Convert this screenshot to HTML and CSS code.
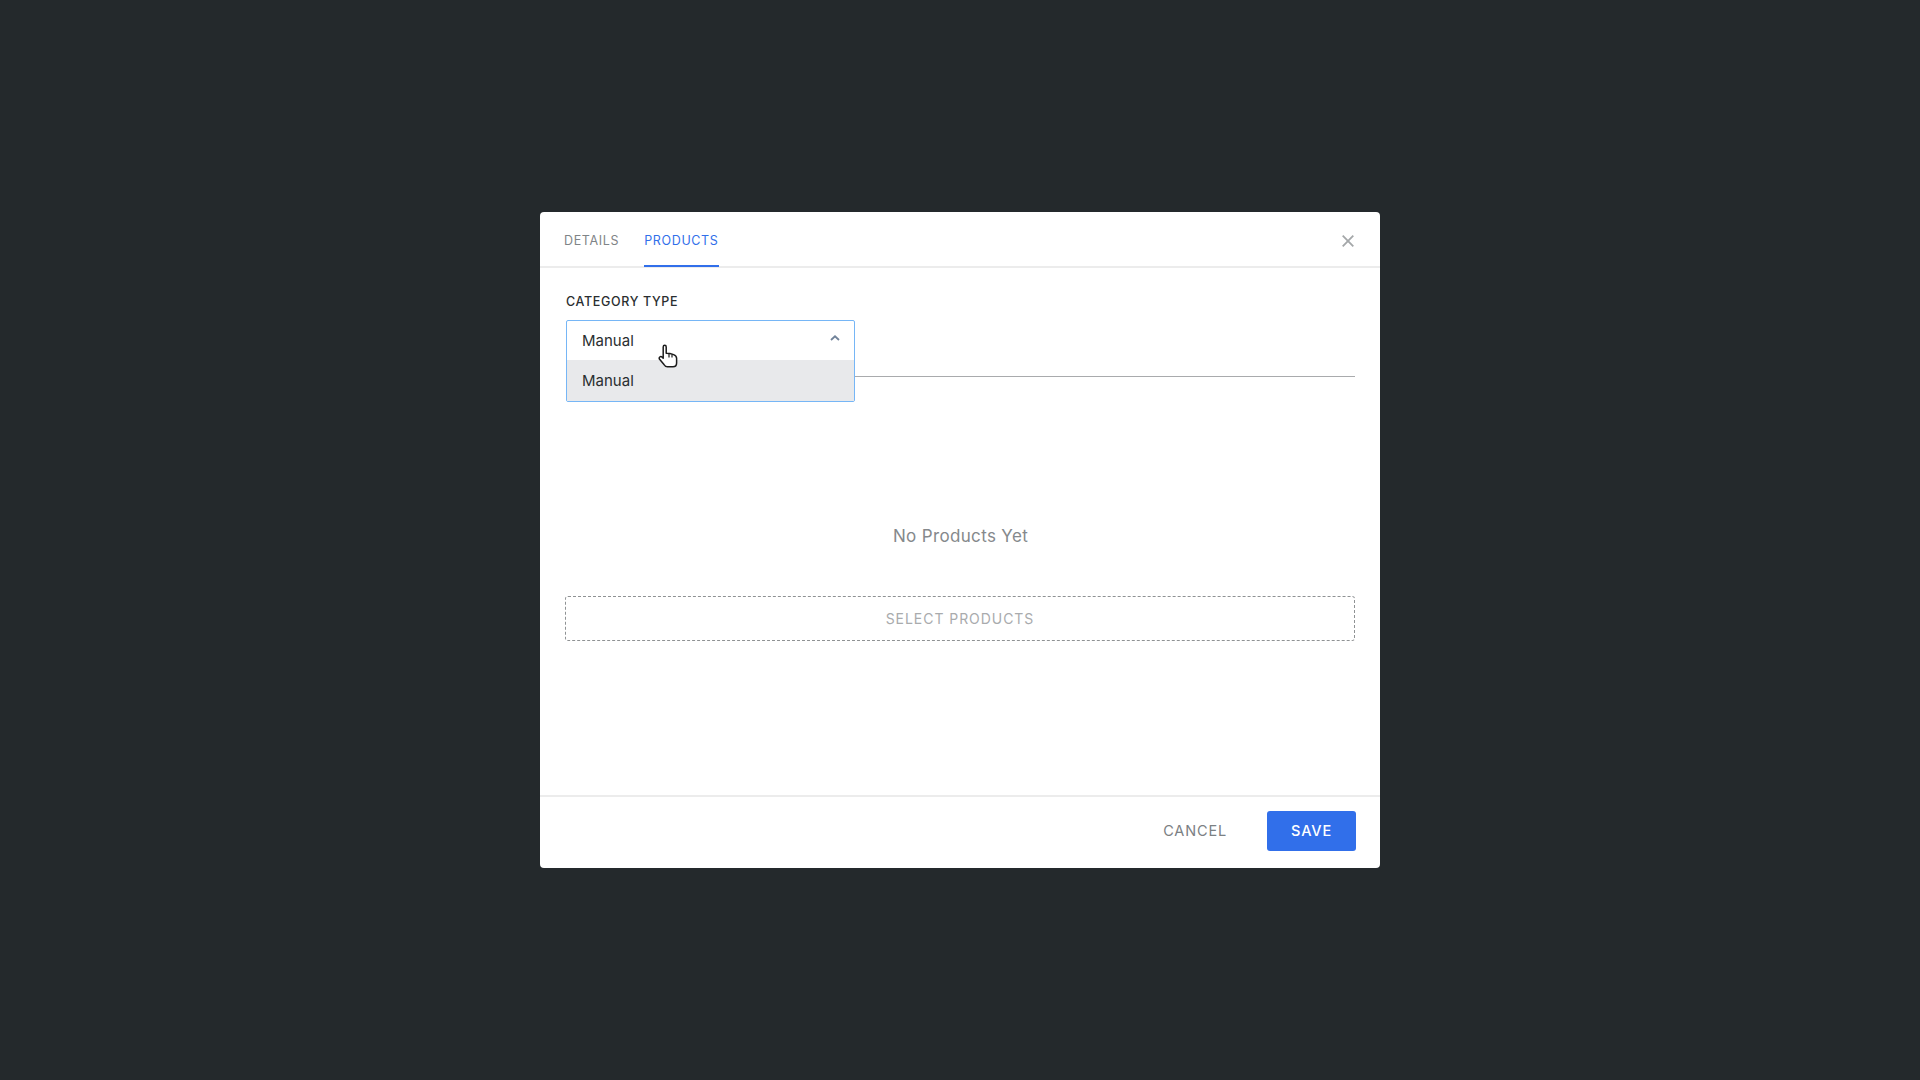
FILE: index.html
```html
<!DOCTYPE html>
<html>
<head>
    <title>Category Products</title>
    <link rel="stylesheet" href="styles.css">
</head>
<body>
    <div class="modal">
        <div class="modal-header">
            <div class="tabs">
                <div class="tab">DETAILS</div>
                <div class="tab tab-active">PRODUCTS</div>
            </div>
            <svg class="close-icon" width="12" height="12" viewBox="0 0 12 12">
                <path d="M0.7 0.7 L11.3 11.3 M11.3 0.7 L0.7 11.3" stroke="#a4a7a9" stroke-width="1.8" fill="none"/>
            </svg>
        </div>

        <div class="modal-body">
            <div class="field-label">CATEGORY TYPE</div>
            <div class="field">
                <div class="dropdown">
                    <div class="dropdown-value">
                        <span>Manual</span>
                        <svg class="chevron" width="10" height="6" viewBox="0 0 10 6">
                            <path d="M1 5 L5 1.3 L9 5" stroke="#71839a" stroke-width="1.8" fill="none"/>
                        </svg>
                    </div>
                    <div class="dropdown-option">Manual</div>
                </div>
            </div>

            <div class="empty-text">No Products Yet</div>
            <div class="select-products">SELECT PRODUCTS</div>
        </div>

        <div class="modal-footer">
            <div class="btn-cancel">CANCEL</div>
            <div class="btn-save">SAVE</div>
        </div>
    </div>

    <!-- mouse pointer caught in the shot -->
    <svg class="pointer" width="20" height="24" viewBox="0 0 20 24">
        <path d="M5.2 14.2 L5.2 3 C5.2 0.8 8.2 0.8 8.2 3 L8.2 9.2 C10.5 9.2 13 9.6 15.6 10.6 C17.6 11.4 18.6 12.4 18.6 14.2 L18.6 19 C18.6 21.4 17.4 22.8 15 22.8 L9.4 22.8 C7.8 22.8 7 22 6 20.6 L1.8 15.6 C0.2 13.6 2.6 11.6 4.2 13.2 Z" fill="#fff" stroke="#1c1c1c" stroke-width="1.5" stroke-linejoin="round"/>
        <path d="M11 10 L11 13.5 M14 10.6 L14 13.5" stroke="#1c1c1c" stroke-width="1.2" fill="none"/>
    </svg>
</body>
</html>
```

FILE: styles.css
```css
* {
    box-sizing: border-box;
}

body {
    margin: 0;
    height: 100vh;
    display: flex;
    align-items: center;
    justify-content: center;
    background-color: #24292c;
    font-family: Inter, "Liberation Sans", sans-serif;
}

.modal {
    width: 840px;
    height: 656px;
    background-color: #fff;
    border-radius: 4px;
    display: flex;
    flex-direction: column;
}

.modal-header {
    height: 56px;
    padding: 0 26px 0 24px;
    border-bottom: 2px solid #ececec;
    display: flex;
    align-items: center;
    justify-content: space-between;
}

.close-icon {
    margin-top: 4px;
}

.tabs {
    height: 54px;
    display: flex;
    gap: 25px;
}

.tab {
    height: 55px;
    padding-top: 21px;
    font-size: 12.5px;
    line-height: 16px;
    letter-spacing: 0.65px;
    color: #7f8487;
}

.tab-active {
    color: #316fea;
    border-bottom: 2px solid #316fea;
}

.modal-body {
    flex: 1;
    padding: 26px 25px 0 26px;
    display: flex;
    flex-direction: column;
}

.field-label {
    font-size: 12.5px;
    line-height: 16px;
    font-weight: 500;
    letter-spacing: 0.65px;
    color: #2a2e30;
}

.field {
    position: relative;
    height: 67px;
    border-bottom: 1px solid #a9abad;
}

.dropdown {
    position: absolute;
    top: 10px;
    left: 0;
    width: 289px;
    height: 82px;
    background-color: #fff;
    border: 1px solid #76b6f6;
    border-radius: 2px;
    font-size: 15px;
    color: #2a2e30;
}

.dropdown-value {
    height: 39px;
    padding: 0 14px 0 15px;
    display: flex;
    align-items: center;
    justify-content: space-between;
}

.chevron {
    margin-bottom: 5px;
}

.dropdown-option {
    height: 41px;
    padding: 0 15px;
    display: flex;
    align-items: center;
    background-color: #e8e9eb;
}

.empty-text {
    margin-top: 149px;
    text-align: center;
    font-size: 17px;
    line-height: 20px;
    letter-spacing: 0.35px;
    color: #85898c;
}

.select-products {
    height: 45px;
    margin-top: 50px;
    margin-left: -1px;
    border: 1px dashed #8f9294;
    border-radius: 3px;
    display: flex;
    align-items: center;
    justify-content: center;
    font-size: 14px;
    letter-spacing: 0.95px;
    color: #a9abad;
}

.modal-footer {
    height: 73px;
    padding: 13px 24px 17px 0;
    border-top: 2px solid #ececec;
    display: flex;
    align-items: center;
    justify-content: flex-end;
    gap: 40px;
    font-size: 14.5px;
    letter-spacing: 0.85px;
}

.btn-cancel {
    color: #7b8083;
}

.btn-save {
    width: 89px;
    height: 40px;
    background-color: #316fea;
    border-radius: 3px;
    display: flex;
    align-items: center;
    justify-content: center;
    color: #fff;
    font-weight: 500;
}

.pointer {
    position: absolute;
    left: 658px;
    top: 344px;
}
```
